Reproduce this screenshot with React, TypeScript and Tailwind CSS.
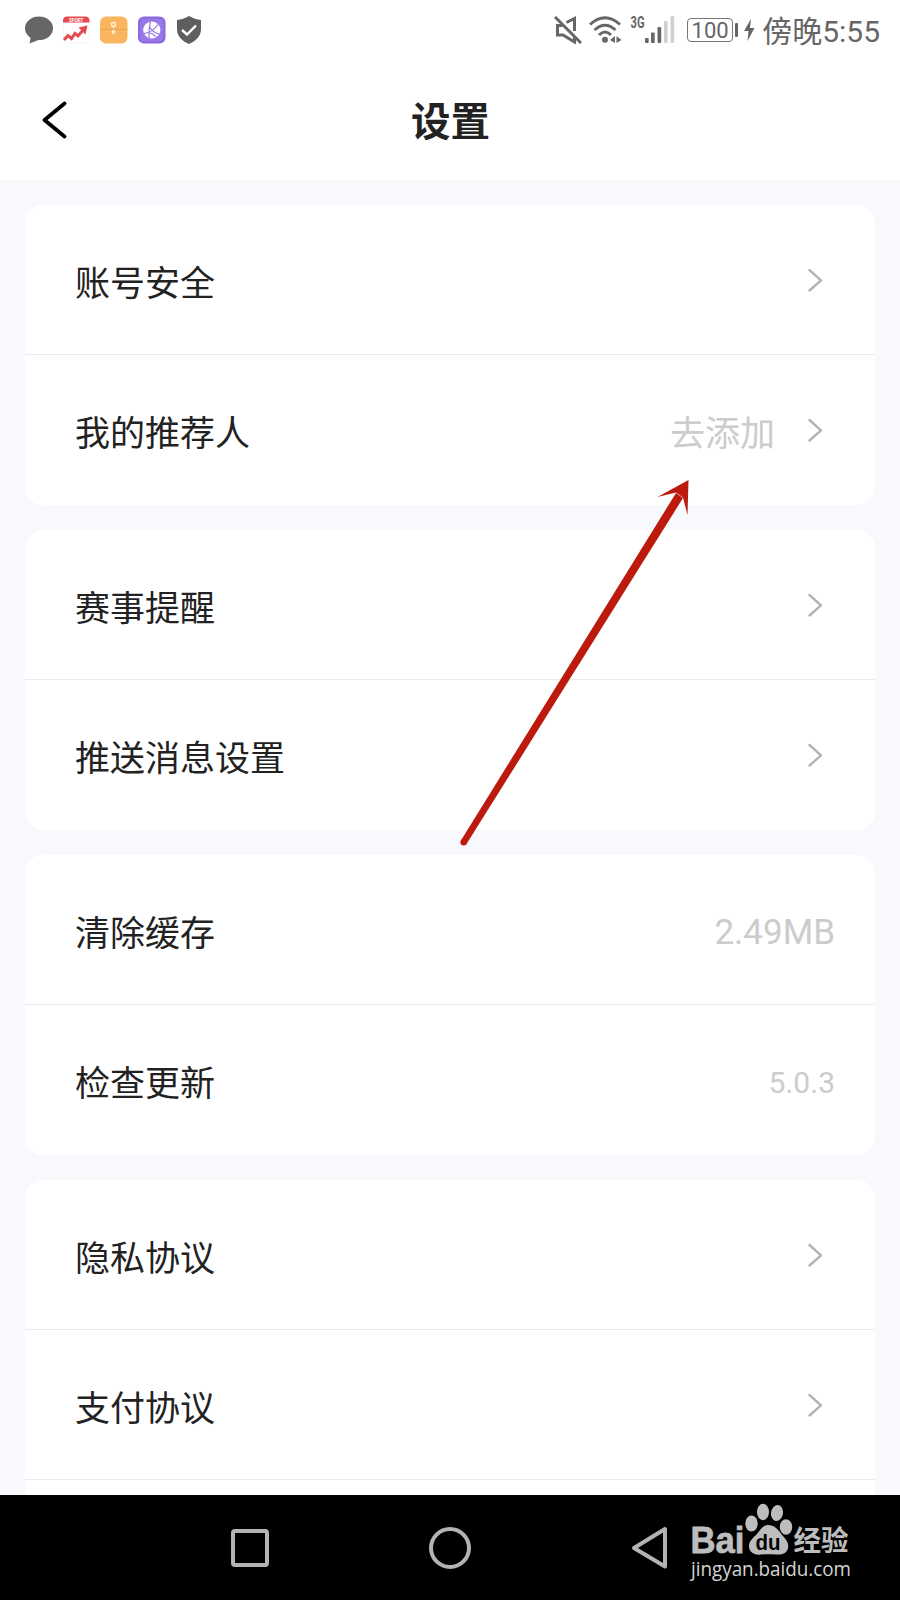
import React from 'react';

type Row = {
  label?: string;
  value?: string;
  valueClass?: string;
  arrow?: boolean;
};

const groups: Row[][] = [
  [
    { label: "账号安全", arrow: true },
    { label: "我的推荐人", value: "去添加", valueClass: "text-[35px] pt-[9px] mr-[33px]", arrow: true }
  ],
  [
    { label: "赛事提醒", arrow: true },
    { label: "推送消息设置", arrow: true }
  ],
  [
    { label: "清除缓存", value: "2.49MB", valueClass: "text-[35px] pt-[6px] -mr-[12px]" },
    { label: "检查更新", value: "5.0.3", valueClass: "text-[30px] pt-[5px] -mr-[12px]" }
  ],
  [
    { label: "隐私协议", arrow: true },
    { label: "支付协议", arrow: true },
    {}
  ]
];

const StatusBar = () => (
  <div className="h-[60px] shrink-0 flex items-center justify-between pl-[25px] pr-[20px] text-[#666]">
    <div className="flex items-center">
      <svg width="29" height="28" viewBox="0 0 29 28" fill="#666">
        <ellipse cx="14" cy="12.3" rx="14" ry="11.8" />
        <path d="M6 20 L4.5 27.5 L16 23 Z" />
      </svg>
      <svg className="ml-[9px]" width="27" height="28" viewBox="0 0 27 28">
        <rect x="0.5" y="1" width="25.5" height="26" rx="4" fill="#fff" stroke="#f5f5f5" />
        <path d="M0 6.5 V4.5 Q0 0.5 4.5 0.5 H22 Q26.5 0.5 26.5 4.5 V6.5 Z" fill="#e64a4e" />
        <text x="13.2" y="5.5" textAnchor="middle" fill="#fff" fontSize="4.5" fontFamily="Roboto" fontWeight="700">SPORT</text>
        <path d="M1 24 L5 19.5 L8.5 22.5 L12 17.5 L15 20 L21 13" fill="none" stroke="#e64a4e" strokeWidth="3" />
        <path d="M15.5 11.5 L24.5 9.5 L22.5 18.5 Z" fill="#e64a4e" />
      </svg>
      <svg className="ml-[10px]" width="28" height="28" viewBox="0 0 28 28">
        <rect x="0" y="0.5" width="27.5" height="27" rx="6" fill="#fbb45f" />
        <path d="M0 13.5 H27.5" stroke="#eba552" />
        <g fill="none" stroke="#fff3df" strokeWidth="1.3">
          <circle cx="13.5" cy="8.5" r="2" />
          <circle cx="13.5" cy="16" r="1.3" />
          <path d="M13.5 10.5 V12" />
        </g>
      </svg>
      <svg className="ml-[10px]" width="28" height="28" viewBox="0 0 28 28">
        <rect x="0" y="0.5" width="27.5" height="27" rx="6" fill="#8d67dc" />
        <rect x="2" y="2.5" width="23.5" height="23" rx="4.5" fill="#9a77e6" />
        <circle cx="13.8" cy="14" r="8.6" fill="#fff" />
        <path d="M12.5 5.5 Q10.5 13 11 22 M5.5 17.5 Q14 17 20 8.5 M11.5 11 Q15 17 21.5 18 M11 17 Q14.5 17 18 21" fill="none" stroke="#9270df" strokeWidth="1.1" />
      </svg>
      <svg className="ml-[11px]" width="25" height="28" viewBox="0 0 25 28">
        <path d="M12 0 C16 2.5 20 3.5 24 4 V13 C24 20 19 25 12 28 C5 25 0 20 0 13 V4 C4 3.5 8 2.5 12 0 Z" fill="#5f5f5f" />
        <path d="M5 14 L10 18.5 L19 9.5" fill="none" stroke="#fff" strokeWidth="2.4" />
      </svg>
    </div>
    <div className="flex items-center">
      <svg width="28" height="28" viewBox="0 0 28 28" fill="none" stroke="#666" strokeWidth="3">
        <path d="M1 1 L27 27" />
        <path d="M8.5 9.5 H3.5 V19 H9 L20.5 26 V21 M12.5 6.5 L20.5 2.5 V15" />
      </svg>
      <svg className="ml-[7px]" width="34" height="28" viewBox="0 0 34 28" fill="none" stroke="#666" strokeWidth="2.9">
        <path d="M1 8.5 Q16 -5 31 8.5" />
        <path d="M5.5 14 Q16 4.5 26.5 14" />
        <path d="M10 19 Q16 13 22 19" />
        <circle cx="16" cy="23.7" r="3" fill="#666" stroke="none" />
        <path d="M21 24 L26 20 V27 Z M27.5 20 L32.5 24 L27.5 27 Z" fill="#666" stroke="none" />
      </svg>
      <svg className="ml-[7px] overflow-visible" width="46" height="28" viewBox="0 0 46 28" fill="#666">
        <text x="0.5" y="12" textLength="14" lengthAdjust="spacingAndGlyphs" fontSize="16" fontFamily="Roboto" fontWeight="700">3G</text>
        <rect x="15" y="22" width="3.7" height="5" rx="1" />
        <rect x="21" y="16.5" width="3.7" height="10.5" rx="1" />
        <rect x="27.5" y="11" width="3.7" height="16" rx="1" />
        <rect x="34" y="5" width="3.7" height="22" rx="1" fill="#d0d0d0" />
        <rect x="40.5" y="0" width="3.7" height="27" rx="1" fill="#d0d0d0" />
      </svg>
      <div className="ml-[11px] w-[46px] h-[24px] border-[1.5px] border-[#777] rounded-[4px] flex items-center justify-center text-[22px] leading-none pt-px">100</div>
      <div className="ml-[2px] w-[3px] h-[14px] rounded-[1px] bg-[#666]"></div>
      <svg className="ml-[6px]" width="11" height="22" viewBox="0 0 11 22" fill="#666">
        <path d="M7 0 L0 12 H4.5 L3.5 22 L10.5 9 H6 Z" />
      </svg>
      <span className="ml-[7px] pt-[4px] text-[30px] leading-none whitespace-nowrap">傍晚5:55</span>
    </div>
  </div>
);

const Header = () => (
  <div className="h-[120px] shrink-0 grid grid-cols-3 items-center px-[42px]">
    <svg width="26" height="38" viewBox="0 0 26 38" fill="none" stroke="#000" strokeWidth="3.8" strokeLinecap="round" strokeLinejoin="round">
      <path d="M22.5 2.5 L2.5 19 L22.5 35.5" />
    </svg>
    <h1 className="pt-[5px] pl-px text-center text-[39.5px] leading-none font-bold text-[#222]">设置</h1>
  </div>
);

const SettingRow = ({ label, value, valueClass, arrow }: Row) => (
  <div className="h-[150px] flex items-center pl-[50px] pr-[52px] border-b border-[#ebebeb] last:border-b-0">
    <span className="flex-1 pt-[10px] text-[35px] leading-[50px] text-[#222]">{label}</span>
    {value && <span className={`${valueClass} leading-[50px] text-[#ccc]`}>{value}</span>}
    {arrow && (
      <svg width="15" height="24" viewBox="0 0 15 24" fill="none" stroke="#b3b3b3" strokeWidth="2.4" strokeLinecap="round" strokeLinejoin="round">
        <path d="M1.5 2 L13 12.3 L1.5 22.5" />
      </svg>
    )}
  </div>
);

const BaiduMark = () => (
  <svg className="absolute left-[686px] top-[4px]" width="180" height="90" viewBox="0 0 180 90" fill="#bdbdbd">
    <text x="4.5" y="54" fontSize="37" textLength="54" lengthAdjust="spacingAndGlyphs" fontFamily="Liberation Sans" fontWeight="700" stroke="#bdbdbd" strokeWidth="0.8">Bai</text>
    <ellipse cx="65.5" cy="24.5" rx="6.2" ry="8" />
    <ellipse cx="77" cy="13" rx="6" ry="8.2" />
    <ellipse cx="91" cy="14" rx="6" ry="8" transform="rotate(10 91 14)" />
    <ellipse cx="100" cy="28" rx="6.2" ry="7.8" />
    <path d="M82 26 C88 26 92 30 96 36 C101 41 103 45 102 49 C101 55 95 56 90 55.5 C85 55 79 55 75 55.5 C68 56.5 63 53 63 47 C63 42 67 39 71 35 C74 31 77 26 82 26 Z" />
    <text x="69.5" y="50.5" fontSize="22" textLength="25" lengthAdjust="spacingAndGlyphs" fill="#000" fontFamily="Liberation Sans" fontWeight="700">du</text>
    <text x="107.5" y="52" fontSize="28" textLength="55" lengthAdjust="spacingAndGlyphs" fontFamily="Noto Sans CJK SC" fontWeight="700">经验</text>
    <text x="5" y="76.5" fontSize="20" textLength="160" lengthAdjust="spacingAndGlyphs" fontFamily="Open Sans" fill="#d4d4d4">jingyan.baidu.com</text>
  </svg>
);

const NavBar = () => (
  <div className="relative h-[105px] shrink-0 bg-black flex items-center pl-[231px]">
    <div className="w-[38px] h-[38px] border-[4px] border-[#b3b3b3] rounded-[4px]"></div>
    <div className="ml-[160px] w-[42px] h-[42px] border-[4px] border-[#b3b3b3] rounded-full"></div>
    <svg className="ml-[160px]" width="38" height="44" viewBox="0 0 38 44" fill="none" stroke="#b3b3b3" strokeWidth="4" strokeLinejoin="round">
      <path d="M34 3 V40.5 L3 22 Z" />
    </svg>
    <BaiduMark />
  </div>
);

const App = () => {
  return (
    <div className="relative w-[900px] h-[1600px] overflow-hidden flex flex-col bg-white font-[Roboto,'Noto_Sans_CJK_SC',sans-serif]">
      <StatusBar />
      <Header />
      <main className="flex-1 min-h-0 overflow-hidden bg-[#f7f9fd] px-[25px] pt-[25px] flex flex-col gap-[25px]">
        {groups.map((rows, index) => (
          <section key={index} className="shrink-0 bg-white rounded-[18px]">
            {rows.map((row, rowIndex) => (
              <SettingRow key={rowIndex} {...row} />
            ))}
          </section>
        ))}
      </main>
      <NavBar />

      {/* pointer to the referrer entry */}
      <svg className="absolute left-[455px] top-[475px]" width="240" height="375" viewBox="0 0 240 375" fill="#bb1a0d">
        <circle cx="8.7" cy="367.300" r="3.3" />
        <path d="M5.900 365.500 L221 18 L228 23 L11.500 369.100 Z" />
        <path d="M233.5 5 L202.500 22 L221 17.500 L228 22.500 L232.500 40 Z" />
      </svg>
    </div>
  );
};

export default App;
